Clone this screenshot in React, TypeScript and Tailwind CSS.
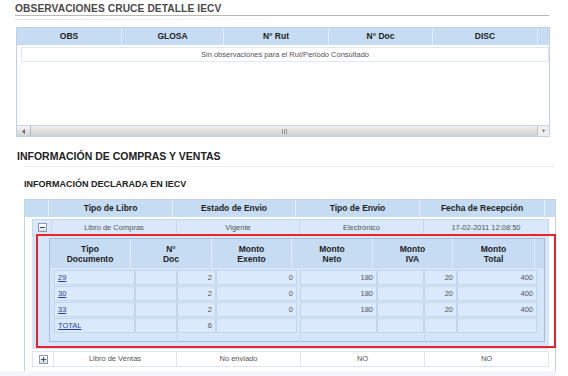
import React from 'react';

const font = { fontFamily: '"Liberation Sans", Arial, sans-serif' };

const Expander = ({ open }: { open: boolean }) => (
  <span className="flex h-[9px] w-[9px] items-center justify-center border border-[#8a9aab] bg-gradient-to-b from-white to-[#d6dde6]">
    <svg width="5" height="5" viewBox="0 0 5 5">
      <rect x="0" y="2" width="5" height="1" fill="#3a4a5c" />
      {!open && <rect x="2" y="0" width="1" height="5" fill="#3a4a5c" />}
    </svg>
  </span>
);

const obsCols = ['OBS', 'GLOSA', 'N° Rut', 'N° Doc', 'DISC'];
const libroCols = ['Tipo de Libro', 'Estado de Envio', 'Tipo de Envio', 'Fecha de Recepción'];
const detalleCols = [
  ['Tipo', 'Documento'],
  ['N°', 'Doc'],
  ['Monto', 'Exento'],
  ['Monto', 'Neto'],
  ['Monto', 'IVA'],
  ['Monto', 'Total'],
];

const detalleRows = [
  { tipo: '29', doc: '2', exento: '0', neto: '180', iva: '20', total: '400' },
  { tipo: '30', doc: '2', exento: '0', neto: '180', iva: '20', total: '400' },
  { tipo: '33', doc: '2', exento: '0', neto: '180', iva: '20', total: '400' },
  { tipo: 'TOTAL', doc: '6', exento: '', neto: '', iva: '', total: '' },
];

const box = 'h-[15px] border border-[#c3d7ec] bg-[#dae9fb] leading-[13px]';
const num = `${box} pr-[3px] text-right`;

export default function App() {
  return (
    <div className="relative h-[376px] w-[568px] overflow-hidden bg-white text-[#444]" style={font}>
      {/* Observaciones */}
      <div className="pl-[15px] pt-[3px]">
        <h1 className="h-[12px] text-[10.2px] font-bold leading-[12px] tracking-[0.1px] text-[#4a4a4a]">
          OBSERVACIONES CRUCE DETALLE IECV
        </h1>
        <div className="h-[1px] w-[534px] bg-[#b9b9b9]" />
        <div className="mt-[3px] h-[1px] w-[300px] bg-gradient-to-r from-[#e2e2e2] to-white" />
      </div>

      <div className="ml-[16px] mt-[7px] w-[534px] border border-[#bfd0e2]">
        <div className="grid h-[17px] grid-cols-[104px_102px_105px_104px_105px_12px] bg-[#c6dcf2] text-[8.5px] font-bold text-[#222]">
          {obsCols.map((c, i) => (
            <div key={c} className={`flex items-center justify-center ${i > 0 ? 'border-l border-[#e3eefa]' : ''}`}>
              {c}
            </div>
          ))}
          <div className="border-l border-[#e3eefa]" />
        </div>
        <div className="h-[80px] bg-white pl-[4px] pt-[2px]">
          <div className="flex h-[15px] items-center justify-center border border-[#dfe7f0] text-[7.5px] text-[#555]">
            Sin observaciones para el Rut/Periodo Consultado
          </div>
        </div>
        <div className="flex h-[11px] border-t border-[#c9d5e2]">
          <div className="flex w-[14px] items-center justify-center border-r border-[#b5b5b5] bg-gradient-to-b from-[#f4f4f4] to-[#d2d2d2]">
            <svg width="3" height="5" viewBox="0 0 3 5">
              <path d="M3 0 L0 2.5 L3 5 Z" fill="#666" />
            </svg>
          </div>
          <div className="flex flex-1 items-center justify-center bg-gradient-to-b from-[#f2f2f2] via-[#e0e0e0] to-[#cfcfcf]">
            <svg width="5" height="5" viewBox="0 0 5 5">
              <path d="M0.5 0 V5 M2.5 0 V5 M4.5 0 V5" stroke="#999" strokeWidth="1" />
            </svg>
          </div>
          <div className="flex w-[12px] items-center justify-center border-l border-[#c0c0c0] bg-[#eeeeee]">
            <svg width="4" height="4" viewBox="0 0 4 4">
              <path d="M0 0 L4 2 L2 2 L2 4 Z" fill="#666" />
            </svg>
          </div>
        </div>
      </div>

      {/* Compras y ventas */}
      <div className="pl-[17px] pt-[13px]">
        <h2 className="h-[12px] text-[10.5px] font-bold leading-[12px] text-[#222]">
          INFORMACIÓN DE COMPRAS Y VENTAS
        </h2>
      </div>
      <div className="ml-[24px] mt-[4px] h-[1px] w-[531px] bg-[#ececec]" />
      <div className="pl-[24px] pt-[12px]">
        <h3 className="h-[10px] text-[9px] font-bold leading-[10px] text-[#222]">INFORMACIÓN DECLARADA EN IECV</h3>
      </div>

      <div className="ml-[24px] mt-[10px] w-[532px] border-x border-t border-[#c2d2e2]">
        <div className="grid h-[17px] grid-cols-[23px_124px_123px_124px_125px_11px] bg-[#c6dcf2] text-[8.5px] font-bold text-[#222]">
          <div />
          {libroCols.map((c) => (
            <div key={c} className="flex items-center justify-center border-l border-[#e3eefa]">
              {c}
            </div>
          ))}
          <div className="border-l border-[#e3eefa]" />
        </div>

        <div className="pl-[7px] pt-[2px]">
          {/* Libro de Compras */}
          <div className="grid h-[17px] w-[517px] grid-cols-[20px_125px_123px_124px_125px] bg-[#d9e9fb] text-[7.5px] text-[#555]">
            <div className="flex items-center justify-center border border-[#c3d8ee]">
              <Expander open />
            </div>
            {['Libro de Compras', 'Vigente', 'Electrónico', '17-02-2011 12:08:50'].map((v) => (
              <div key={v} className="flex items-center justify-center border-y border-r border-[#c3d8ee]">
                {v}
              </div>
            ))}
          </div>

          {/* Detalle */}
          <div className="h-[113px] w-[517px] bg-[#d5e6fa] pl-[17px] pt-[2px]">
            <div className="h-[104px] w-[496px] border border-[#a9bdd2]">
              <div className="grid h-[29px] grid-cols-[80px_81px_80px_81px_80px_82px_10px] bg-[#c6dcf2] text-[8.5px] font-bold leading-[10px] text-[#222]">
                {detalleCols.map(([a, b], i) => (
                  <div key={b} className={`flex flex-col items-center justify-center ${i > 0 ? 'border-l border-[#e3eefa]' : ''}`}>
                    <span>{a}</span>
                    <span>{b}</span>
                  </div>
                ))}
                <div className="border-l border-[#e3eefa]" />
              </div>
              <div className="pl-[4px] pt-[2px] text-[7.5px] text-[#555]">
                {detalleRows.map((r) => (
                  <div key={r.tipo} className="mb-[1px] grid grid-cols-[81px_42px_39px_81px_3px_77px_47px_33px_80px]">
                    <div className={`${box} pl-[3px]`}>
                      <span className="text-[#2b3f9c] underline">{r.tipo}</span>
                    </div>
                    <div className={num} />
                    <div className={num}>{r.doc}</div>
                    <div className={num}>{r.exento}</div>
                    <div />
                    <div className={num}>{r.neto}</div>
                    <div className={num} />
                    <div className={num}>{r.iva}</div>
                    <div className={num}>{r.total}</div>
                  </div>
                ))}
                <div className="grid h-[8px] grid-cols-[81px_42px_39px_81px_3px_77px_47px_33px_80px]">
                  <div />
                  <div />
                  <div className="border-l border-[#c3d7ec]" />
                  <div />
                  <div />
                  <div className="border-l border-[#c3d7ec]" />
                  <div />
                  <div className="border-l border-[#c3d7ec]" />
                  <div />
                </div>
              </div>
            </div>
          </div>

          {/* Libro de Ventas */}
          <div className="mt-[2px] grid h-[16px] w-[517px] grid-cols-[22px_123px_124px_124px_124px] bg-white text-[7.5px] text-[#555]">
            <div className="flex items-center justify-center border border-[#dde6f0]">
              <Expander open={false} />
            </div>
            {['Libro de Ventas', 'No enviado', 'NO', 'NO'].map((v, i) => (
              <div key={i} className="flex items-center justify-center border-y border-r border-[#dde6f0]">
                {v}
              </div>
            ))}
          </div>
          <div className="h-[4px]" />
        </div>
      </div>
      <div className="h-[10px] w-[556px] bg-[#f1f6fc]" />

      {/* annotation */}
      <div className="pointer-events-none absolute left-[36px] top-[234px] h-[114px] w-[520px] border-2 border-[#e8232b]" />
    </div>
  );
}
